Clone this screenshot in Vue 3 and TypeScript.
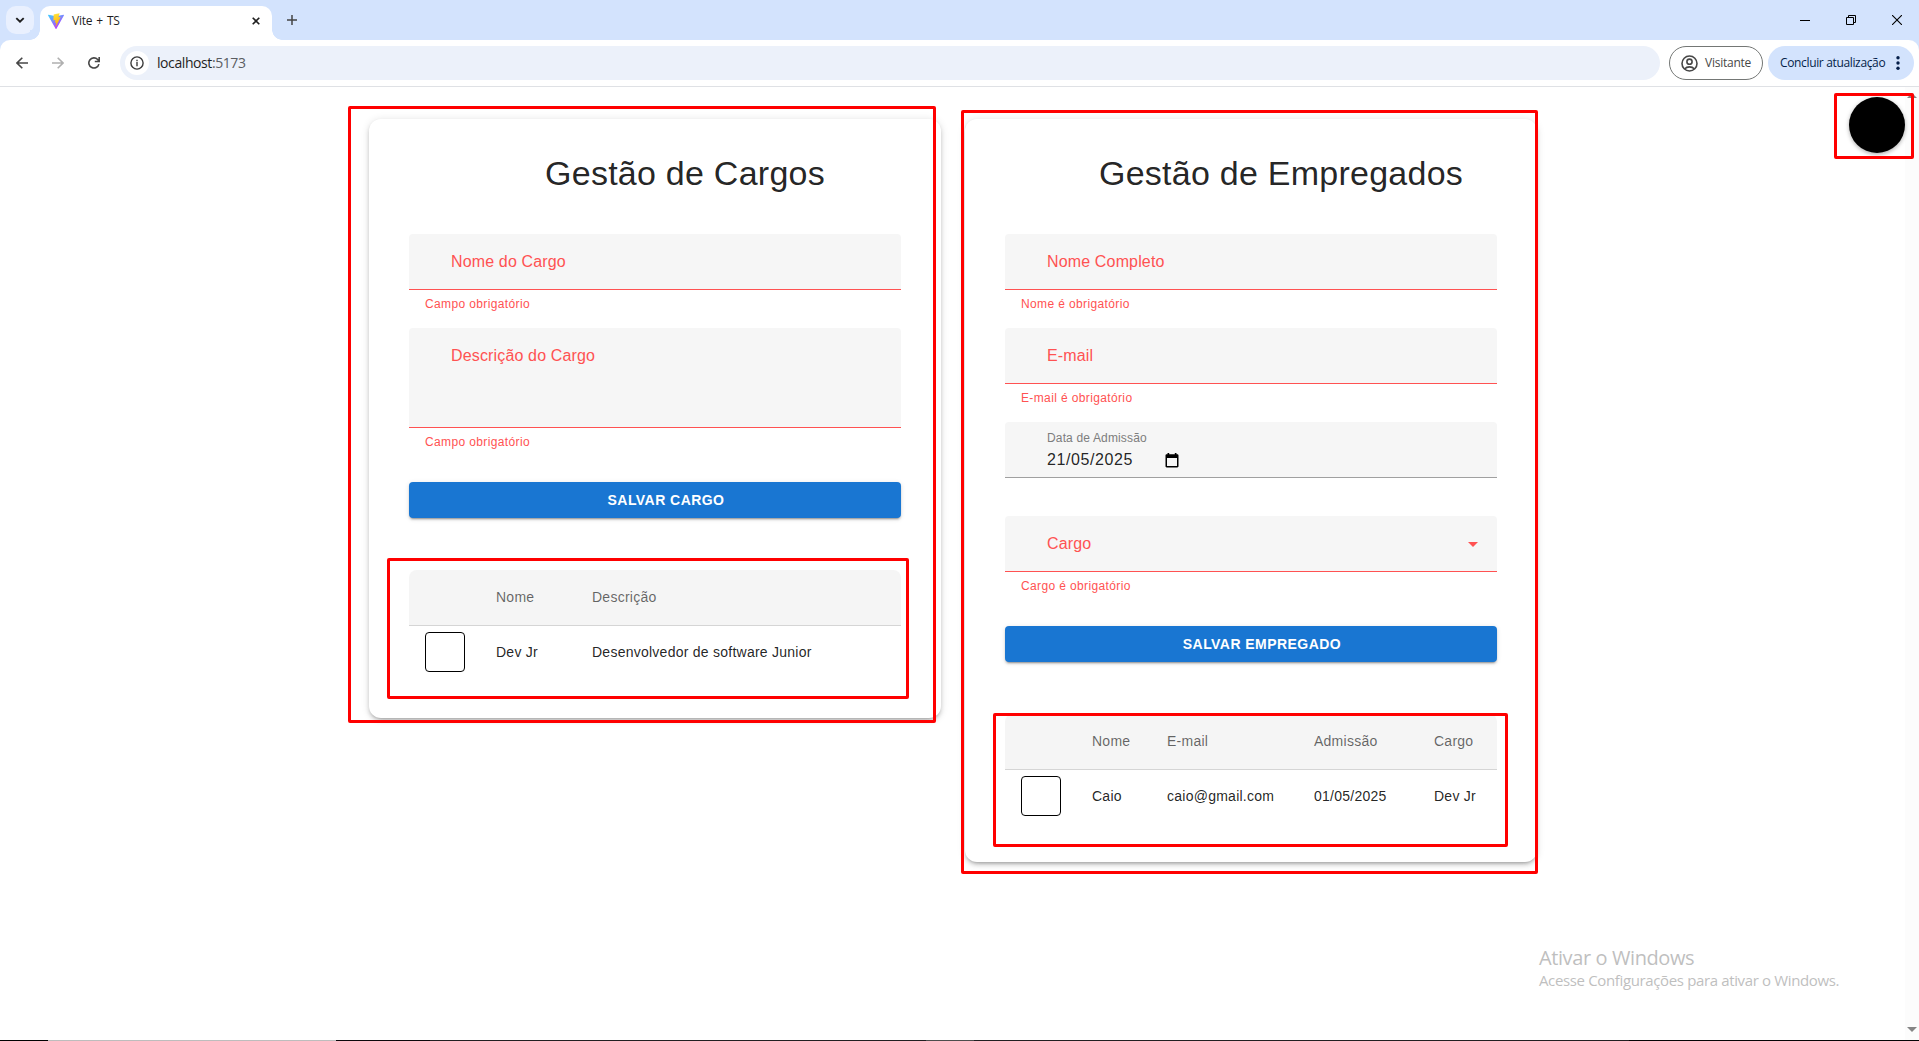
<script setup lang="ts">
interface Field {
  label: string
  error?: string
  kind?: 'area' | 'date' | 'select'
  value?: string
}
interface Panel {
  id: string
  title: string
  fields: Field[]
  action: string
  heads: string[]
  rows: string[][]
}

const panels: Panel[] = [
  {
    id: 'cargos',
    title: 'Gestão de Cargos',
    fields: [
      { label: 'Nome do Cargo', error: 'Campo obrigatório' },
      { label: 'Descrição do Cargo', error: 'Campo obrigatório', kind: 'area' },
    ],
    action: 'Salvar Cargo',
    heads: ['Nome', 'Descrição'],
    rows: [['Dev Jr', 'Desenvolvedor de software Junior']],
  },
  {
    id: 'empregados',
    title: 'Gestão de Empregados',
    fields: [
      { label: 'Nome Completo', error: 'Nome é obrigatório' },
      { label: 'E-mail', error: 'E-mail é obrigatório' },
      { label: 'Data de Admissão', kind: 'date', value: '21/05/2025' },
      { label: 'Cargo', error: 'Cargo é obrigatório', kind: 'select' },
    ],
    action: 'Salvar Empregado',
    heads: ['Nome', 'E-mail', 'Admissão', 'Cargo'],
    rows: [['Caio', 'caio@gmail.com', '01/05/2025', 'Dev Jr']],
  },
]
</script>

<template>
  <div class="window">
    <header class="tabstrip">
      <button class="tab-search">
        <svg width="10" height="6" viewBox="0 0 10 6"><path d="M1.3 1.1 5 4.7l3.7-3.6" fill="none" stroke="#1f1f1f" stroke-width="1.9" /></svg>
      </button>
      <div class="tab">
        <svg class="favicon" width="16" height="16" viewBox="0 0 32 32">
          <defs>
            <linearGradient id="va" x1="0" y1="0" x2=".6" y2="1"><stop offset="0" stop-color="#41d1ff" /><stop offset="1" stop-color="#bd34fe" /></linearGradient>
            <linearGradient id="vb" x1=".4" y1="0" x2=".6" y2="1"><stop offset="0" stop-color="#ffea83" /><stop offset=".1" stop-color="#ffdd35" /><stop offset="1" stop-color="#ffa800" /></linearGradient>
          </defs>
          <path fill="url(#va)" d="M31.8 5.2 16.9 31.5a1 1 0 0 1-1.7 0L.2 5.2a1 1 0 0 1 1-1.5l14.8 2.7 14.8-2.7a1 1 0 0 1 1 1.5Z" />
          <path fill="url(#vb)" d="m22.8.3-11 2.1a.5.5 0 0 0-.4.4l-.7 11.5c0 .3.3.5.5.5l3.1-.7c.3 0 .5.2.5.5l-1 4.4c0 .3.2.5.5.4l1.9-.5c.3-.1.6.1.5.4l-1.5 7c0 .5.5.7.7.3l.2-.2 9-17.9a.4.4 0 0 0-.5-.6l-3.1.6a.4.4 0 0 1-.5-.5l2.1-7.1a.5.5 0 0 0-.3-.6Z" />
        </svg>
        <span class="tab-title">Vite + TS</span>
        <svg class="tab-close" width="8" height="8" viewBox="0 0 8 8"><path d="m.7.7 6.6 6.6m0-6.6L.7 7.3" stroke="#1f1f1f" stroke-width="1.6" /></svg>
      </div>
      <svg class="new-tab" width="10" height="10" viewBox="0 0 10 10"><path d="M5 0v10M0 5h10" stroke="#444" stroke-width="1.5" /></svg>
      <div class="controls">
        <svg width="10" height="10" viewBox="0 0 10 10"><path d="M0 5.5h10" stroke="#000" /></svg>
        <svg width="10" height="10" viewBox="0 0 10 10" fill="none" stroke="#000"><path d="M.5 2.5h7v7h-7zM2.5 2.5v-2h7v7h-2" /></svg>
        <svg width="10" height="10" viewBox="0 0 10 10"><path d="m0 0 10 10M10 0 0 10" stroke="#000" stroke-width="1.1" /></svg>
      </div>
    </header>

    <div class="toolbar-back">
      <nav class="toolbar">
        <svg class="nav-icon" width="12" height="12" viewBox="0 0 12 12" fill="none" stroke="#474747" stroke-width="1.6"><path d="M12 6H1.4M6.3.7 1 6l5.3 5.3" /></svg>
        <svg class="nav-icon" width="12" height="12" viewBox="0 0 12 12" fill="none" stroke="#b0b0b0" stroke-width="1.6"><path d="M0 6h10.6M5.7.7 11 6l-5.3 5.3" /></svg>
        <svg class="nav-icon" width="12" height="12" viewBox="0 0 12 12" fill="none" stroke="#474747" stroke-width="1.6"><path d="M10.9 7.1A5.1 5.1 0 1 1 9.7 2.5l1.3 1.6M11.2 0v4.5H6.8" /></svg>
        <div class="omnibox">
          <span class="site-info">
            <svg width="14" height="14" viewBox="0 0 14 14" fill="none" stroke="#3c3c3c" stroke-width="1.4"><circle cx="7" cy="7" r="6.1" /><path d="M7 6.1v4.1M7 3.7v1.5" /></svg>
          </span>
          <span class="url">localhost<i>:5173</i></span>
        </div>
        <button class="visitor">
          <svg width="17" height="17" viewBox="0 0 17 17" fill="none" stroke="#474747" stroke-width="1.6"><circle cx="8.5" cy="8.5" r="7.5" /><circle cx="8.5" cy="6.7" r="2.6" /><path d="M3.6 14c2.5-2.9 7.3-2.9 9.8 0" /></svg>
          <span>Visitante</span>
        </button>
        <button class="update">
          <span>Concluir atualização</span>
          <svg width="4" height="14" viewBox="0 0 4 14" fill="#041e49"><circle cx="2" cy="1.8" r="1.7" /><circle cx="2" cy="7" r="1.7" /><circle cx="2" cy="12.2" r="1.7" /></svg>
        </button>
      </nav>
    </div>

    <div class="viewport">
      <main class="page">
        <section v-for="p in panels" :key="p.id" class="card" :class="p.id">
          <h1>{{ p.title }}</h1>
          <div v-for="f in p.fields" :key="f.label" class="group">
            <div class="field" :class="[f.kind, { bad: f.error }]">
              <div class="field-text">
                <label>{{ f.label }}</label>
                <div v-if="f.value" class="date-row">
                  <span>{{ f.value }}</span>
                  <svg width="14" height="15" viewBox="0 0 14 15"><path fill="#000" fill-rule="evenodd" d="M2.5 0h1.7v1.2h5.6V0h1.7v1.2h.8c.6 0 1.2.5 1.2 1.2v10.900c0 .7-.6 1.200-1.200 1.200H1.700C1 14.500.5 14 .5 13.300V2.400c0-.7.5-1.200 1.200-1.200h.8ZM2 5v8h10V5Z" /></svg>
                </div>
              </div>
              <svg v-if="f.kind === 'select'" class="caret" width="10" height="5" viewBox="0 0 10 5"><path d="M0 0h10L5 5Z" fill="#ff5252" /></svg>
            </div>
            <p class="helper">{{ f.error }}</p>
          </div>
          <button class="save">{{ p.action }}</button>
          <div class="table">
            <div class="tr head">
              <span></span>
              <span v-for="h in p.heads" :key="h">{{ h }}</span>
            </div>
            <div v-for="(r, i) in p.rows" :key="i" class="tr">
              <span class="box"></span>
              <span v-for="c in r" :key="c">{{ c }}</span>
            </div>
            <div class="mark mark-table"></div>
          </div>
          <div class="mark mark-card"></div>
        </section>
      </main>
      <aside class="scrollbar">
        <svg width="10" height="5" viewBox="0 0 10 5"><path d="M0 5h10L5 0Z" fill="#858585" /></svg>
        <svg width="10" height="5" viewBox="0 0 10 5"><path d="M0 0h10L5 5Z" fill="#858585" /></svg>
      </aside>
      <div class="fab"></div>
      <div class="mark mark-fab"></div>
      <div class="activation">
        <strong>Ativar o Windows</strong>
        <span>Acesse Configurações para ativar o Windows.</span>
      </div>
    </div>
    <footer class="edge"></footer>
  </div>
</template>

<style>
body {
  margin: 0;
  overflow: hidden;
}
</style>

<style scoped>
* {
  box-sizing: border-box;
}
.window {
  height: 1041px;
  display: flex;
  flex-direction: column;
  background: #fff;
  font-family: 'Liberation Sans', Arial, sans-serif;
  color: rgba(0, 0, 0, 0.87);
}
svg {
  display: block;
  flex: none;
}
button {
  border: 0;
  padding: 0;
  font: inherit;
}
.tabstrip {
  height: 40px;
  flex: none;
  display: flex;
  padding-left: 6px;
  background: #d3e3fd;
}
.tab-search {
  width: 28px;
  height: 28px;
  margin: 6px 6px 0 0;
  border-radius: 10px;
  background: #e9f0fe;
  display: flex;
  align-items: center;
  justify-content: center;
}
.tab {
  position: relative;
  width: 232px;
  height: 34px;
  margin-top: 6px;
  padding: 0 12px 5px 8px;
  border-radius: 10px 10px 0 0;
  background: #fff;
  display: flex;
  align-items: center;
}
.tab::before,
.tab::after {
  content: '';
  position: absolute;
  bottom: 0;
  width: 10px;
  height: 10px;
}
.tab::before {
  left: -10px;
  background: radial-gradient(circle at 0 0, #d3e3fd 9.5px, #fff 10px);
}
.tab::after {
  right: -10px;
  background: radial-gradient(circle at 100% 0, #d3e3fd 9.5px, #fff 10px);
}
.tab-title {
  margin-left: 8px;
  flex: 1;
  font: 12px/16px 'Open Sans', sans-serif;
  letter-spacing: -0.25px;
  word-spacing: 1.2px;
  color: #1f1f1f;
}
.favicon {
  margin-top: 1px;
}
.new-tab {
  margin: 15px 0 0 15px;
}
.controls {
  margin: 15px 17px 0 auto;
  display: flex;
  gap: 36px;
}
.toolbar-back {
  flex: none;
  background: #d3e3fd;
}
.toolbar {
  height: 47px;
  display: flex;
  align-items: center;
  padding: 0 5px 0 16px;
  border-bottom: 1px solid #dfe1e5;
  border-radius: 10px 10px 0 0;
  background: #fff;
}
.nav-icon {
  margin-right: 24px;
}
.nav-icon:nth-child(3) {
  margin-right: 20px;
}
.omnibox {
  flex: 1;
  height: 34px;
  border-radius: 17px;
  background: #ecf1fa;
  display: flex;
  align-items: center;
  padding-left: 5px;
}
.site-info {
  width: 24px;
  height: 24px;
  border-radius: 50%;
  background: #fff;
  display: flex;
  align-items: center;
  justify-content: center;
}
.url {
  margin-left: 8px;
  font: 14px/20px 'Open Sans', sans-serif;
  letter-spacing: -0.42px;
  color: #1f1f1f;
}
.url i {
  font-style: normal;
  color: #5a5d61;
}
.visitor {
  width: 94px;
  height: 34px;
  margin: 0 5px 0 9px;
  padding-left: 11px;
  border: 1px solid #747775;
  border-radius: 17px;
  background: #fff;
  display: flex;
  align-items: center;
  gap: 7px;
  font: 12px/16px 'Open Sans', sans-serif;
  letter-spacing: -0.25px;
  color: #474747;
}
.update {
  width: 146px;
  height: 34px;
  padding-left: 12px;
  border-radius: 17px;
  background: #d3e3fd;
  display: flex;
  align-items: center;
  font: 12px/16px 'Open Sans', sans-serif;
  letter-spacing: -0.35px;
  white-space: nowrap;
  color: #041e49;
}
.update span {
  width: 116px;
  text-align: left;
}
.viewport {
  position: relative;
  flex: 1;
  display: flex;
  min-height: 0;
}
.page {
  flex: 1;
  display: flex;
  align-items: flex-start;
  gap: 24px;
  padding: 32px 0 0 369px;
}
.card {
  position: relative;
  width: 572px;
  flex: none;
  padding: 34px 40px 0;
  border-radius: 12px;
  background: #fff;
  box-shadow: 0 3px 3px -2px rgba(0, 0, 0, 0.2), 0 3px 4px rgba(0, 0, 0, 0.14), 0 1px 8px rgba(0, 0, 0, 0.12);
}
.cargos {
  height: 599px;
}
.empregados {
  height: 743px;
}
h1 {
  margin: 0 0 41px;
  padding-left: 60px;
  text-align: center;
  font-size: 34px;
  line-height: 40px;
  font-weight: 400;
  letter-spacing: 0.25px;
}
.group {
  display: flex;
  flex-direction: column;
}
.field {
  height: 56px;
  padding: 0 19px 0 42px;
  border-radius: 4px 4px 0 0;
  background: #f6f6f6;
  border-bottom: 1px solid #a0a0a0;
  display: flex;
  justify-content: space-between;
  font-size: 16px;
  line-height: 20px;
  letter-spacing: 0.15px;
}
.field.bad {
  border-color: #ff5252;
  color: #ff5252;
}
.field-text {
  padding-top: 18px;
}
.field.area {
  height: 100px;
}
.date .field-text {
  padding-top: 8px;
}
.date label {
  display: block;
  font-size: 12px;
  line-height: 16px;
  color: #7d7d7d;
}
.date-row {
  display: flex;
  align-items: center;
  margin-top: 4px;
  letter-spacing: 0.6px;
}
.date-row span {
  width: 118px;
}
.caret {
  margin-top: 26px;
}
.helper {
  height: 38px;
  margin: 0;
  padding: 6px 16px 0;
  font-size: 12px;
  line-height: 16px;
  letter-spacing: 0.37px;
  color: #ff5252;
}
.save {
  width: 100%;
  height: 36px;
  margin-top: 16px;
  padding-left: 22px;
  border-radius: 4px;
  background: #1976d2;
  color: #fff;
  font-size: 14px;
  font-weight: 700;
  text-transform: uppercase;
  letter-spacing: 0.45px;
  box-shadow: 0 3px 1px -2px rgba(0, 0, 0, 0.2), 0 2px 2px rgba(0, 0, 0, 0.14), 0 1px 5px rgba(0, 0, 0, 0.12);
}
.table {
  position: relative;
  margin-top: 52px;
  font-size: 14px;
  letter-spacing: 0.25px;
}
.tr {
  height: 52px;
  padding-left: 16px;
  display: grid;
  align-items: center;
  white-space: nowrap;
}
.cargos .tr {
  grid-template-columns: 71px 96px 1fr;
}
.empregados .tr {
  grid-template-columns: 71px 75px 147px 120px 1fr;
}
.head {
  height: 56px;
  padding-bottom: 2px;
  border-bottom: 1px solid #d5d5d5;
  border-radius: 8px 8px 0 0;
  background: #f5f5f5;
  color: rgba(0, 0, 0, 0.6);
}
.box {
  width: 40px;
  height: 40px;
  border: 1px solid #000;
  border-radius: 4px;
}
.mark {
  position: absolute;
  border: 3px solid #f00;
  border-radius: 2px;
}
.cargos .mark-card {
  left: -21px;
  top: -13px;
  width: 588px;
  height: 617px;
}
.cargos .mark-table {
  left: -22px;
  top: -12px;
  width: 522px;
  height: 141px;
}
.empregados .mark-card {
  left: -4px;
  top: -9px;
  width: 577px;
  height: 764px;
}
.empregados .mark-table {
  left: -12px;
  top: -1px;
  width: 515px;
  height: 134px;
}
.scrollbar {
  width: 14px;
  padding: 6px 2px 8px;
  background: #fcfcfc;
  display: flex;
  flex-direction: column;
  align-items: center;
  justify-content: space-between;
}
.fab {
  position: absolute;
  right: 14px;
  top: 10px;
  width: 56px;
  height: 56px;
  border-radius: 50%;
  background: #000;
  box-shadow: 0 2px 4px -1px rgba(0, 0, 0, 0.2), 0 1px 5px rgba(0, 0, 0, 0.2);
}
.mark-fab {
  right: 5px;
  top: 6px;
  width: 80px;
  height: 66px;
}
.activation {
  position: absolute;
  left: 1539px;
  top: 858px;
  display: flex;
  flex-direction: column;
  font-family: 'Open Sans', sans-serif;
  white-space: nowrap;
  color: #bfbfbf;
}
.activation strong {
  font-size: 20px;
  font-weight: 400;
  line-height: 25px;
  letter-spacing: -0.4px;
}
.activation span {
  font-size: 15px;
  line-height: 20px;
  letter-spacing: -0.36px;
}
.edge {
  flex: none;
  height: 1px;
  background: linear-gradient(90deg, #000 48px, #bdbdbd 48px 336px, #0c080c 336px 430px, #211f21 430px 926px, #4d4d4d 926px 974px, #211f21 974px 1629px, #050305 1629px);
}
</style>
